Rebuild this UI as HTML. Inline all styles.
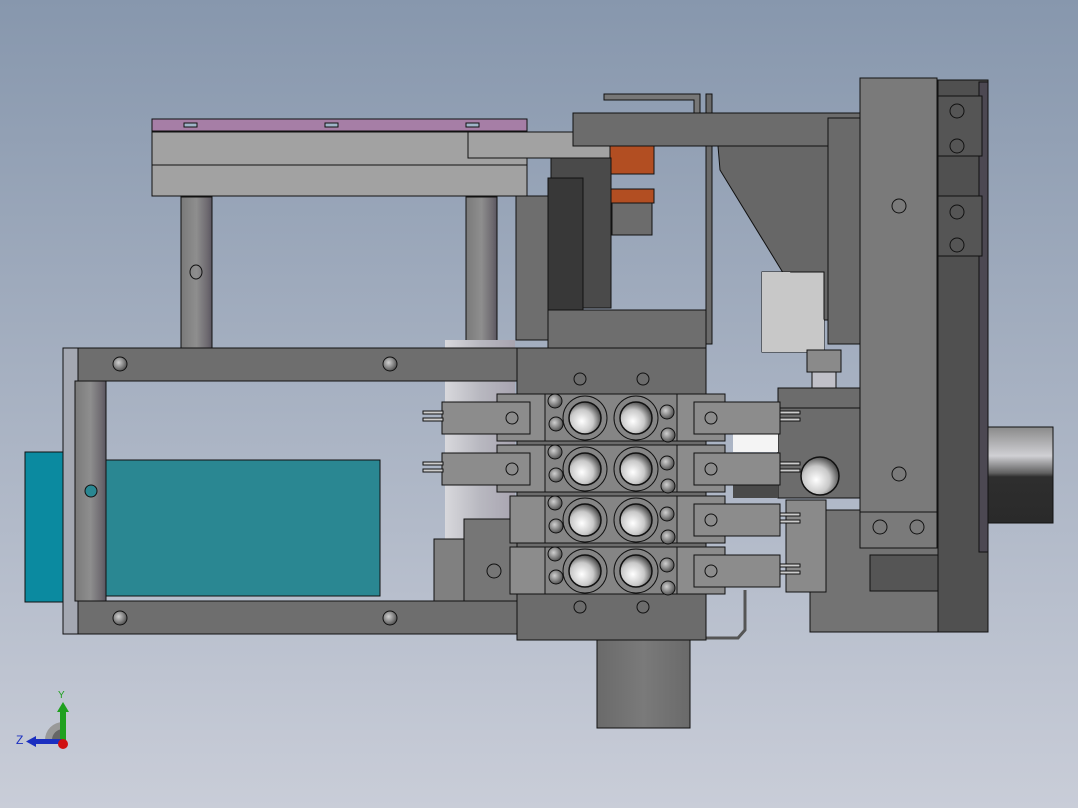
<!DOCTYPE html>
<html><head><meta charset="utf-8"><style>
html,body{margin:0;padding:0;width:1078px;height:808px;overflow:hidden}
svg{display:block}
text{font-family:"Liberation Sans",sans-serif}
</style></head><body>
<svg width="1078" height="808" viewBox="0 0 1078 808" xmlns="http://www.w3.org/2000/svg">
<defs>
<linearGradient id="bg" x1="0" y1="0" x2="0" y2="1"><stop offset="0" stop-color="#8797ad"/><stop offset="1" stop-color="#c9cdd8"/></linearGradient>
<linearGradient id="post" x1="0" y1="0" x2="1" y2="0"><stop offset="0" stop-color="#7a7a7a"/><stop offset=".5" stop-color="#8e8e8e"/><stop offset=".85" stop-color="#6e6a70"/><stop offset="1" stop-color="#5a5660"/></linearGradient>
<linearGradient id="cyl" x1="0" y1="0" x2="1" y2="0"><stop offset="0" stop-color="#d8d8dc"/><stop offset=".5" stop-color="#b8b8c0"/><stop offset="1" stop-color="#a8a4b0"/></linearGradient>
<linearGradient id="rc" x1="0" y1="0" x2="0" y2="1"><stop offset="0" stop-color="#8a8a8a"/><stop offset=".3" stop-color="#d0d0d4"/><stop offset=".48" stop-color="#606060"/><stop offset=".52" stop-color="#2e2e2e"/><stop offset="1" stop-color="#2a2a2a"/></linearGradient>
<linearGradient id="bc" x1="0" y1="0" x2="1" y2="0"><stop offset="0" stop-color="#6a6a6a"/><stop offset=".5" stop-color="#7a7a7a"/><stop offset="1" stop-color="#6a6a6a"/></linearGradient>
<radialGradient id="port" cx=".4" cy=".6" r=".6"><stop offset="0" stop-color="#ffffff"/><stop offset=".6" stop-color="#c8c8c8"/><stop offset="1" stop-color="#555"/></radialGradient>
<radialGradient id="bolt" cx=".4" cy=".4" r=".6"><stop offset="0" stop-color="#d0d0d0"/><stop offset="1" stop-color="#555"/></radialGradient>
</defs>
<rect width="1078" height="808" fill="url(#bg)"/>
<g stroke="#111" stroke-width="1">
<rect x="152" y="119" width="375" height="12" fill="#a67ea6"/>
<rect x="184" y="123" width="13" height="4" fill="#9fb4c8"/><rect x="325" y="123" width="13" height="4" fill="#9fb4c8"/><rect x="466" y="123" width="13" height="4" fill="#9fb4c8"/>
<rect x="152" y="132" width="375" height="64" fill="#a2a2a2"/>
<line x1="152" y1="165" x2="527" y2="165"/>
<rect x="468" y="132" width="142" height="26" fill="#a2a2a2"/>
<rect x="181" y="197" width="31" height="151" fill="url(#post)"/>
<rect x="466" y="197" width="31" height="151" fill="url(#post)"/>
<ellipse cx="196" cy="272" rx="6" ry="7" fill="none"/>
<path d="M604 94 H700 V113 H694 V100 H604 Z" fill="#777"/>
<rect x="706" y="94" width="6" height="250" fill="#6a6a6a"/>
<rect x="573" y="113" width="287" height="33" fill="#6c6c6c"/>
<rect x="610" y="146" width="44" height="28" fill="#b24e22"/>
<rect x="610" y="189" width="44" height="14" fill="#b24e22"/>
<rect x="612" y="203" width="40" height="32" fill="#6c6c6c"/>
<rect x="551" y="158" width="60" height="150" fill="#4a4a4a"/>
<rect x="548" y="178" width="35" height="138" fill="#383838"/>
<rect x="516" y="196" width="32" height="144" fill="#6e6e6e"/>
<rect x="548" y="310" width="158" height="38" fill="#6e6e6e"/>
<path d="M718 146 H828 V320 H812 L720 170 Z" fill="#676767"/>
<rect x="762" y="272" width="62" height="80" fill="#c8c8c8"/>
<path d="M762 272 H790 L824 320 V352 H762 Z" fill="#c8c8c8" stroke="none"/>
<rect x="828" y="118" width="32" height="226" fill="#6a6a6a"/>
<rect x="807" y="350" width="34" height="22" fill="#8a8a8a"/>
<rect x="812" y="372" width="24" height="20" fill="#c0c0c8"/>
<rect x="445" y="340" width="70" height="260" fill="url(#cyl)" stroke="none"/>
<rect x="25" y="452" width="47" height="150" fill="#0b8aa0"/>
<rect x="70" y="460" width="310" height="136" fill="#2a8792"/>
<rect x="63" y="348" width="15" height="286" fill="#a4a8b2"/>
<rect x="78" y="348" width="440" height="33" fill="#6e6e6e"/>
<rect x="78" y="601" width="440" height="33" fill="#6e6e6e"/>
<rect x="75" y="381" width="31" height="220" fill="url(#post)"/>
<circle cx="91" cy="491" r="6" fill="#2a8792"/>
<circle cx="120" cy="364" r="7" fill="url(#bolt)"/><circle cx="390" cy="364" r="7" fill="url(#bolt)"/>
<circle cx="120" cy="618" r="7" fill="url(#bolt)"/><circle cx="390" cy="618" r="7" fill="url(#bolt)"/>
<rect x="464" y="519" width="54" height="82" fill="#767676"/>
<rect x="434" y="539" width="30" height="62" fill="#808080"/>
<circle cx="494" cy="571" r="7" fill="none"/>
<rect x="597" y="640" width="93" height="88" fill="url(#bc)"/>
<path d="M745 590 V630 L738 638 H706" fill="none" stroke="#555" stroke-width="3"/>
<rect x="517" y="348" width="189" height="292" fill="#6c6c6c"/>
<circle cx="580" cy="379" r="6" fill="none"/><circle cx="643" cy="379" r="6" fill="none"/>
<circle cx="580" cy="607" r="6" fill="none"/><circle cx="643" cy="607" r="6" fill="none"/>
<rect x="810" y="510" width="178" height="122" fill="#737373"/>
<rect x="870" y="555" width="118" height="36" fill="#555"/>
<rect x="938" y="80" width="50" height="552" fill="#505050"/>
<rect x="979" y="82" width="9" height="470" fill="#4c4852"/>
<rect x="938" y="96" width="44" height="60" fill="#555"/>
<rect x="938" y="196" width="44" height="60" fill="#555"/>
<circle cx="957" cy="111" r="7" fill="none"/><circle cx="957" cy="146" r="7" fill="none"/>
<circle cx="957" cy="212" r="7" fill="none"/><circle cx="957" cy="245" r="7" fill="none"/>
<rect x="860" y="78" width="77" height="470" fill="#7a7a7a"/>
<line x1="860" y1="512" x2="937" y2="512"/>
<circle cx="899" cy="206" r="7" fill="none"/><circle cx="899" cy="474" r="7" fill="none"/>
<circle cx="880" cy="527" r="7" fill="none"/><circle cx="917" cy="527" r="7" fill="none"/>
<rect x="988" y="427" width="65" height="96" fill="url(#rc)"/>
<rect x="778" y="388" width="82" height="20" fill="#6c6c6c"/>
<rect x="778" y="408" width="82" height="90" fill="#6c6c6c"/>
<circle cx="820" cy="476" r="19" fill="url(#port)" stroke-width="1.5"/>
<rect x="733" y="434" width="45" height="18" fill="#f4f4f4" stroke="none"/>
<rect x="733" y="480" width="45" height="18" fill="#4a4a4a" stroke="none"/>
<rect x="786" y="500" width="40" height="92" fill="#8a8a8a"/>
</g>
<g stroke="#111" stroke-width="1">
<g id="core">
<rect x="545" y="394" width="132" height="47" fill="#858585"/>
<circle cx="585" cy="418" r="22" fill="#858585"/><circle cx="585" cy="418" r="16" fill="url(#port)" stroke-width="1.5"/>
<circle cx="636" cy="418" r="22" fill="#858585"/><circle cx="636" cy="418" r="16" fill="url(#port)" stroke-width="1.5"/>
<circle cx="555" cy="401" r="7" fill="url(#bolt)"/><circle cx="556" cy="424" r="7" fill="url(#bolt)"/>
<circle cx="667" cy="412" r="7" fill="url(#bolt)"/><circle cx="668" cy="435" r="7" fill="url(#bolt)"/>
<rect x="694" y="402" width="86" height="32" fill="#8c8c8c"/>
<circle cx="711" cy="418" r="6" fill="none"/>
<rect x="780" y="411" width="20" height="3" fill="#ccc"/><rect x="780" y="418" width="20" height="3" fill="#ccc"/>
</g>
<g id="row">
<rect x="497" y="394" width="228" height="47" fill="#8c8c8c"/>
<rect x="442" y="402" width="88" height="32" fill="#8c8c8c"/>
<rect x="423" y="411" width="20" height="3" fill="#ccc"/><rect x="423" y="418" width="20" height="3" fill="#ccc"/>
<circle cx="512" cy="418" r="6" fill="none"/>
<use href="#core"/>
</g>
<use href="#row" y="51"/>
<rect x="510" y="496" width="215" height="47" fill="#8c8c8c"/>
<use href="#core" y="102"/>
<rect x="510" y="547" width="215" height="47" fill="#8c8c8c"/>
<use href="#core" y="153"/>
</g>
<path d="M45 740 A18 18 0 0 1 63 722 V740 Z" fill="#999"/>
<path d="M52 740 A11 11 0 0 1 63 729 V740 Z" fill="#666"/>
<rect x="60" y="710" width="6" height="30" fill="#1fa01f"/>
<path d="M57 712 L63 702 L69 712 Z" fill="#1fa01f"/>
<rect x="34" y="739" width="28" height="5" fill="#1b2fc0"/>
<path d="M36 736 L26 741.5 L36 747 Z" fill="#1b2fc0"/>
<circle cx="63" cy="744" r="5" fill="#d01010"/>
<text x="58" y="698" font-size="10" fill="#1fa01f">Y</text>
<text x="16" y="744" font-size="12" fill="#1b2fc0">Z</text>
</svg>
</body></html>
